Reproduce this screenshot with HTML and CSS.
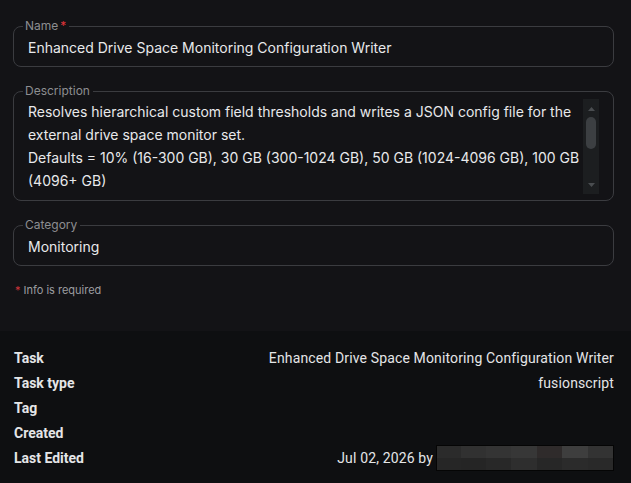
FILE: index.html
```html
<!DOCTYPE html>
<html>
<head>
<meta charset="utf-8">
<link rel="stylesheet" href="styles.css">
</head>
<body>
<div class="form">
  <fieldset class="field">
    <legend>Name<span class="req">*</span></legend>
    <div class="value">Enhanced Drive Space Monitoring Configuration Writer</div>
  </fieldset>
  <fieldset class="field desc">
    <legend>Description</legend>
    <div class="desc-body">
      <div class="desc-text">Resolves hierarchical custom field thresholds and writes a JSON config file for the<br>external drive space monitor set.<br>Defaults = 10% (16-300 GB), 30 GB (300-1024 GB), 50 GB (1024-4096 GB), 100 GB<br>(4096+ GB)</div>
      <div class="scrollbar">
        <svg class="arrow" width="15" height="10" viewBox="0 0 15 10"><path d="M4 7 L7.5 3 L11 7 Z" fill="#4a4d50"/></svg>
        <div class="thumb"></div>
        <div class="track-space"></div>
        <svg class="arrow" width="15" height="10" viewBox="0 0 15 10"><path d="M4 3 L7.5 7 L11 3 Z" fill="#4a4d50"/></svg>
      </div>
    </div>
  </fieldset>
  <fieldset class="field">
    <legend>Category</legend>
    <div class="value">Monitoring</div>
  </fieldset>
  <div class="note"><span class="star">*</span>Info is required</div>
</div>
<div class="details">
  <div class="row"><span class="k">Task</span><span class="v">Enhanced Drive Space Monitoring Configuration Writer</span></div>
  <div class="row"><span class="k">Task type</span><span class="v">fusionscript</span></div>
  <div class="row"><span class="k">Tag</span><span class="v"></span></div>
  <div class="row"><span class="k">Created</span><span class="v"></span></div>
  <div class="row"><span class="k">Last Edited</span><span class="v edited">Jul 02, 2026 by <span class="redacted"><i style="background:#2b2b2b"></i><i style="background:#313131"></i><i style="background:#343434"></i><i style="background:#373737"></i><i style="background:#2f2b2b"></i><i style="background:#3e3e3e"></i><i style="background:#333333"></i><i style="background:#393939"></i><i style="background:#262626"></i><i style="background:#252525"></i><i style="background:#282828"></i><i style="background:#2e2e2e"></i><i style="background:#272727"></i><i style="background:#2b2b2b"></i><i style="background:#292929"></i><i style="background:#2a2a2a"></i></span></span></div>
</div>
</body>
</html>
```

FILE: styles.css
```css
html, body {
  margin: 0;
  padding: 0;
}
body {
  background: #0e0f11;
  width: 631px;
  height: 483px;
  overflow: hidden;
  font-family: Inter, "Noto Sans", sans-serif;
  color: #e6e7e9;
}
.form {
  background: #131316;
  padding: 20px 17px 0 13px;
  height: 331px;
  display: flex;
  flex-direction: column;
  gap: 18px;
  box-sizing: border-box;
}
.field {
  margin: 0;
  border: 1px solid #3b3c40;
  border-radius: 8px;
  padding: 0 14px 8px 14px;
  min-width: 0;
}
.field legend {
  font-size: 12px;
  line-height: 12px;
  color: #8d8e91;
  padding: 0 3px 0 2px;
  margin-left: -5px;
}
.req {
  color: #e0343a;
  margin-left: 2px;
}
.value {
  font-size: 14px;
  line-height: 20px;
  padding-top: 6px;
  color: #e8e9eb;
}
.field.desc {
  padding-bottom: 6px;
}
.desc-body {
  display: flex;
  gap: 4px;
  padding-top: 2px;
}
.desc-text {
  flex: 1;
  font-size: 14px;
  line-height: 23px;
  color: #e8e9eb;
  white-space: nowrap;
  overflow: hidden;
  padding-top: 1px;
}
.scrollbar {
  width: 16px;
  height: 95px;
  background: #1c1e20;
  display: flex;
  flex-direction: column;
  align-items: center;
  padding: 5px 0 4px;
  box-sizing: border-box;
}
.arrow {
  display: block;
  flex: none;
}
.thumb {
  width: 10px;
  height: 32px;
  margin-top: 3px;
  border-radius: 5px;
  background: #3c3f42;
}
.track-space {
  flex: 1;
}
.note {
  font-size: 11px;
  line-height: 14px;
  color: #9c9da0;
  margin-top: -1px;
  padding-left: 2px;
}
.star {
  color: #d0343a;
  margin-right: 3px;
}
.details {
  padding: 14px 17px 13px 14px;
  font-family: Roboto, "Liberation Sans", sans-serif;
  font-size: 14px;
}
.row {
  display: flex;
  justify-content: space-between;
  align-items: center;
  height: 25px;
}
.k {
  font-weight: 700;
  color: #e4e5e7;
}
.v {
  color: #e4e5e7;
  letter-spacing: 0.14px;
}
.edited {
  display: flex;
  align-items: center;
}
.redacted {
  display: grid;
  grid-template-columns: 24px 25px 25px 26px 25px 26px 25px 1fr;
  grid-template-rows: 12px 12px;
  width: 176px;
  border: 1px solid #050505;
  margin-left: 3px;
}
.redacted i {
  display: block;
}
```
